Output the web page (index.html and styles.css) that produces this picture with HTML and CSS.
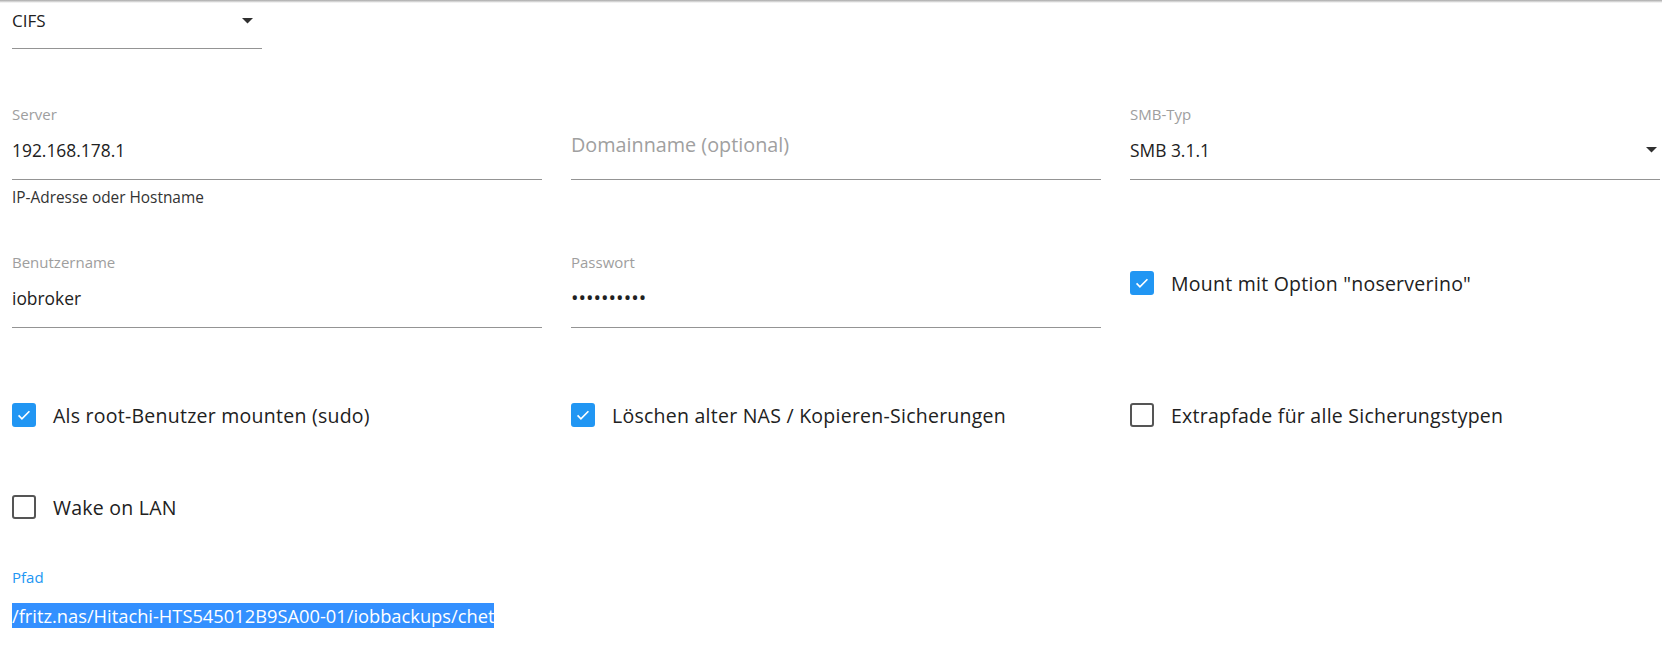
FILE: index.html
```html
<!DOCTYPE html>
<html lang="de">
<head>
    <meta charset="UTF-8">
    <link rel="stylesheet" href="styles.css">
    <title>Backup - CIFS</title>
</head>
<body>
    <div class="shade"></div>
    <div class="page">
        <div class="type-row">
            <div class="select type-select">
                <span class="value">CIFS</span>
                <svg class="arrow" viewBox="7 10 10 5" width="11" height="5.5"><path d="M7 10l5 5 5-5z"/></svg>
            </div>
        </div>

        <div class="row row-server">
            <div class="field">
                <label>Server</label>
                <div class="input"><span class="value">192.168.178.1</span></div>
                <div class="helper">IP-Adresse oder Hostname</div>
            </div>
            <div class="field">
                <label>&nbsp;</label>
                <div class="input"><span class="placeholder">Domainname (optional)</span></div>
            </div>
            <div class="field">
                <label>SMB-Typ</label>
                <div class="input select">
                    <span class="value">SMB 3.1.1</span>
                    <svg class="arrow" viewBox="7 10 10 5" width="11" height="5.5"><path d="M7 10l5 5 5-5z"/></svg>
                </div>
            </div>
        </div>

        <div class="row row-user">
            <div class="field">
                <label>Benutzername</label>
                <div class="input"><span class="value">iobroker</span></div>
            </div>
            <div class="field">
                <label>Passwort</label>
                <div class="input"><span class="value dots">&#8226;&#8226;&#8226;&#8226;&#8226;&#8226;&#8226;&#8226;&#8226;&#8226;</span></div>
            </div>
            <div class="check check-top">
                <span class="box checked"><svg viewBox="0 0 24 24"><path d="M5.5 12.5l4 4L18.5 7.5"/></svg></span>
                <span class="text">Mount mit Option "noserverino"</span>
            </div>
        </div>

        <div class="row row-checks">
            <div class="check">
                <span class="box checked"><svg viewBox="0 0 24 24"><path d="M5.5 12.5l4 4L18.5 7.5"/></svg></span>
                <span class="text">Als root-Benutzer mounten (sudo)</span>
            </div>
            <div class="check">
                <span class="box checked"><svg viewBox="0 0 24 24"><path d="M5.5 12.5l4 4L18.5 7.5"/></svg></span>
                <span class="text">Löschen alter NAS / Kopieren-Sicherungen</span>
            </div>
            <div class="check">
                <span class="box"></span>
                <span class="text">Extrapfade für alle Sicherungstypen</span>
            </div>
        </div>

        <div class="row row-wake">
            <div class="check">
                <span class="box"></span>
                <span class="text">Wake on LAN</span>
            </div>
        </div>

        <div class="path-field">
            <label class="focused">Pfad</label>
            <div class="path-input"><span class="selected">/fritz.nas/Hitachi-HTS545012B9SA00-01/iobbackups/chet</span></div>
        </div>
    </div>
</body>
</html>
```

FILE: styles.css
```css
body {
    margin: 0;
    font-family: 'Open Sans', 'Noto Sans', sans-serif;
    color: #212121;
    background-color: #fff;
}

.shade {
    height: 3px;
    background: linear-gradient(#a8a8a8, #fff);
}

.page {
    padding: 0 2px 0 12px;
}

/* auswahl oben */
.type-row {
    width: 250px;
}

.select {
    display: flex;
    align-items: center;
    justify-content: space-between;
}

.type-select {
    padding: 6px 0 15px 0;
    border-bottom: 1px solid #949494;
    line-height: 24px;
    font-size: 17px;
}

.arrow {
    fill: #303030;
    margin-right: 9px;
}

.row {
    display: grid;
    grid-template-columns: repeat(3, 1fr);
    column-gap: 29px;
}

.row-server {
    margin-top: 57px;
}

.row-user {
    margin-top: 48px;
}

.row-checks {
    margin-top: 67px;
}

.row-wake {
    margin-top: 52px;
}

label {
    display: block;
    height: 16px;
    line-height: 16px;
    font-size: 15px;
    color: #9e9e9e;
}

.input {
    padding: 16px 0 17px 0;
    line-height: 24px;
    font-size: 17.4px;
    border-bottom: 1px solid #949494;
}

.input .arrow {
    margin-right: 3px;
}

.placeholder {
    color: #a0a0a0;
    font-size: 19.8px;
    position: relative;
    top: -5px;
}

.dots {
    font-size: 20px;
}

.helper {
    margin-top: 10px;
    line-height: 16px;
    font-size: 15.4px;
    color: #333;
}

.check {
    display: flex;
    align-items: center;
    height: 40px;
}

.check-top {
    padding-top: 9px;
}

.box {
    width: 24px;
    height: 24px;
    box-sizing: border-box;
    border: 2px solid #555;
    border-radius: 3px;
    margin-right: 17px;
    display: flex;
    align-items: center;
    justify-content: center;
}

.box.checked {
    background-color: #2196f3;
    border-color: #2196f3;
}

.box svg {
    width: 22px;
    height: 22px;
    fill: none;
    stroke: #fff;
    stroke-width: 2;
}

.text {
    font-size: 19.5px;
    letter-spacing: 0.25px;
    color: #212121;
}

.path-field {
    margin-top: 42px;
}

label.focused {
    color: #2196f3;
}

.path-input {
    padding-top: 19px;
    line-height: 24px;
    font-size: 18.3px;
}

.selected {
    background-color: #3390ff;
    color: #fff;
}
```
